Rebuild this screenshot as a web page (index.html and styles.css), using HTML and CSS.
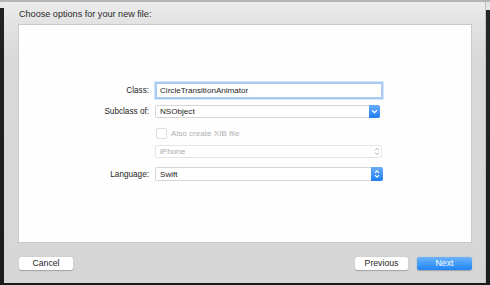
FILE: index.html
```html
<!DOCTYPE html>
<html>
<head>
<meta charset="utf-8">
<link rel="stylesheet" href="styles.css">
</head>
<body>
<div class="topline"></div>
<div class="middle">
  <div class="edge left"></div>
  <div class="sheet">
    <div class="title">Choose options for your new file:</div>
    <div class="box">
      <div class="form">
        <div class="row r1">
          <div class="label">Class:</div>
          <div class="field text focus">CircleTransitionAnimator</div>
        </div>
        <div class="row r2">
          <div class="label">Subclass of:</div>
          <div class="field popup w2">
            <span class="val">NSObject</span>
            <span class="btn blue">
              <svg width="7" height="5" viewBox="0 0 7 5"><path d="M1 1.2 L3.5 3.6 L6 1.2" fill="none" stroke="#fff" stroke-width="1.2"/></svg>
            </span>
          </div>
        </div>
        <div class="row r3">
          <div class="label"></div>
          <div class="check"><span class="cb"></span><span class="cbtext">Also create XIB file</span></div>
        </div>
        <div class="row r4">
          <div class="label"></div>
          <div class="field popup disabled w4">
            <span class="val">iPhone</span>
            <span class="btn grey">
              <svg width="6" height="9" viewBox="0 0 6 9"><path d="M1 3.3 L3 1.3 L5 3.3 M1 5.7 L3 7.7 L5 5.7" fill="none" stroke="#aaa" stroke-width="1"/></svg>
            </span>
          </div>
        </div>
        <div class="row r5">
          <div class="label">Language:</div>
          <div class="field popup w5">
            <span class="val">Swift</span>
            <span class="btn blue">
              <svg width="6" height="10" viewBox="0 0 6 10"><path d="M1 3.8 L3 1.8 L5 3.8 M1 6.2 L3 8.2 L5 6.2" fill="none" stroke="#fff" stroke-width="1.1"/></svg>
            </span>
          </div>
        </div>
      </div>
    </div>
    <div class="footer">
      <div class="button cancel">Cancel</div>
      <div class="spacer"></div>
      <div class="button prev">Previous</div>
      <div class="button next">Next</div>
    </div>
  </div>
  <div class="edge right"></div>
</div>
<div class="bottomline"></div>
</body>
</html>
```

FILE: styles.css
```css
html, body {
  margin: 0;
  padding: 0;
}
body {
  width: 490px;
  height: 285px;
  overflow: hidden;
  background: #1d1d1f;
  font-family: "Liberation Sans", Arial, sans-serif;
  display: flex;
  flex-direction: column;
}
.topline {
  height: 2px;
  background: #b4b4b4;
  flex: none;
}
.middle {
  display: flex;
  height: 281px;
  flex: none;
}
.edge {
  width: 4px;
  flex: none;
}
.edge.left {
  background: linear-gradient(#e8e8e8 0, #e8e8e8 6px, #222 6px, #1c1c1c 100%);
}
.edge.right {
  background: linear-gradient(#e4e4e4 0, #e4e4e4 8px, #262626 8px, #1c1c1c 100%);
}
.bottomline {
  height: 2px;
  background: #1a1a1a;
  flex: none;
}
.sheet {
  flex: 1;
  background: linear-gradient(#ececec 0, #e2e2e2 22px, #d9d9d9 60px, #d6d6d6 100%);
  display: flex;
  flex-direction: column;
  padding: 0 13px 0 14px;
  border-right: 1px solid #c4c4c4;
  box-sizing: border-box;
}
.title {
  height: 22px;
  line-height: 24px;
  font-size: 9.1px;
  color: #2a2a2a;
  padding-left: 1px;
}
.box {
  height: 219px;
  background: #fefefe;
  border: 1px solid #c9c9c9;
  box-sizing: border-box;
  flex: none;
}
.form {
  display: flex;
  flex-direction: column;
  padding-top: 57px;
}
.row {
  display: flex;
  align-items: center;
}
.r1 { height: 17px; }
.r2 { height: 13px; margin-top: 6px; }
.r3 { height: 11px; margin-top: 10px; }
.r4 { height: 13px; margin-top: 6px; }
.r5 { height: 14px; margin-top: 9px; }
.label {
  width: 130px;
  text-align: right;
  font-size: 8.2px;
  color: #252525;
  padding-right: 6px;
  flex: none;
}
.field {
  box-sizing: border-box;
  font-size: 8.1px;
  color: #1e1e1e;
  display: flex;
  align-items: center;
}
.text {
  width: 226px;
  height: 15px;
  margin-left: 1px;
  border: 1px solid #a9c9f1;
  padding-left: 3px;
  background: #fff;
}
.focus {
  box-shadow: 0 0 0 1.5px #a7cbf6;
}
.popup {
  height: 13px;
  border: 1px solid #d6d6d6;
  border-radius: 2px;
  background: #fff;
  padding-left: 4px;
  position: relative;
}
.w2 { width: 225px; }
.w4 { width: 227px; border-color: #e6e6e6; }
.w5 { width: 228px; }
.val {
  flex: 1;
}
.disabled .val {
  color: #a8a8a8;
}
.btn {
  width: 11px;
  height: 13px;
  margin-right: -1px;
  border-radius: 0 2px 2px 0;
  display: flex;
  align-items: center;
  justify-content: center;
  flex: none;
}
.r5 .btn { width: 12px; height: 14px; }
.r5 .popup { height: 14px; }
.btn.blue {
  background: linear-gradient(#6aaefa, #1c7ef5);
}
.btn.grey {
  background: transparent;
}
.check {
  display: flex;
  align-items: center;
  margin-left: 1px;
}
.cb {
  width: 9px;
  height: 9px;
  border: 1px solid #dedede;
  border-radius: 2px;
  background: #fff;
}
.cbtext {
  margin-left: 4px;
  font-size: 8.1px;
  color: #b0b0b0;
}
.footer {
  display: flex;
  align-items: center;
  padding-top: 14px;
  padding-left: 1px;
}
.spacer {
  flex: 1;
}
.button {
  height: 13px;
  box-sizing: border-box;
  border-radius: 2px;
  font-size: 8.7px;
  line-height: 13px;
  text-align: center;
  color: #1e1e1e;
  background: #fff;
  box-shadow: 0 0.5px 1px rgba(0,0,0,0.25);
}
.cancel { width: 54px; }
.prev { width: 53px; margin-right: 9px; }
.next {
  width: 55px;
  color: #fff;
  background: linear-gradient(#6db4fb, #1f84f7);
}
```
